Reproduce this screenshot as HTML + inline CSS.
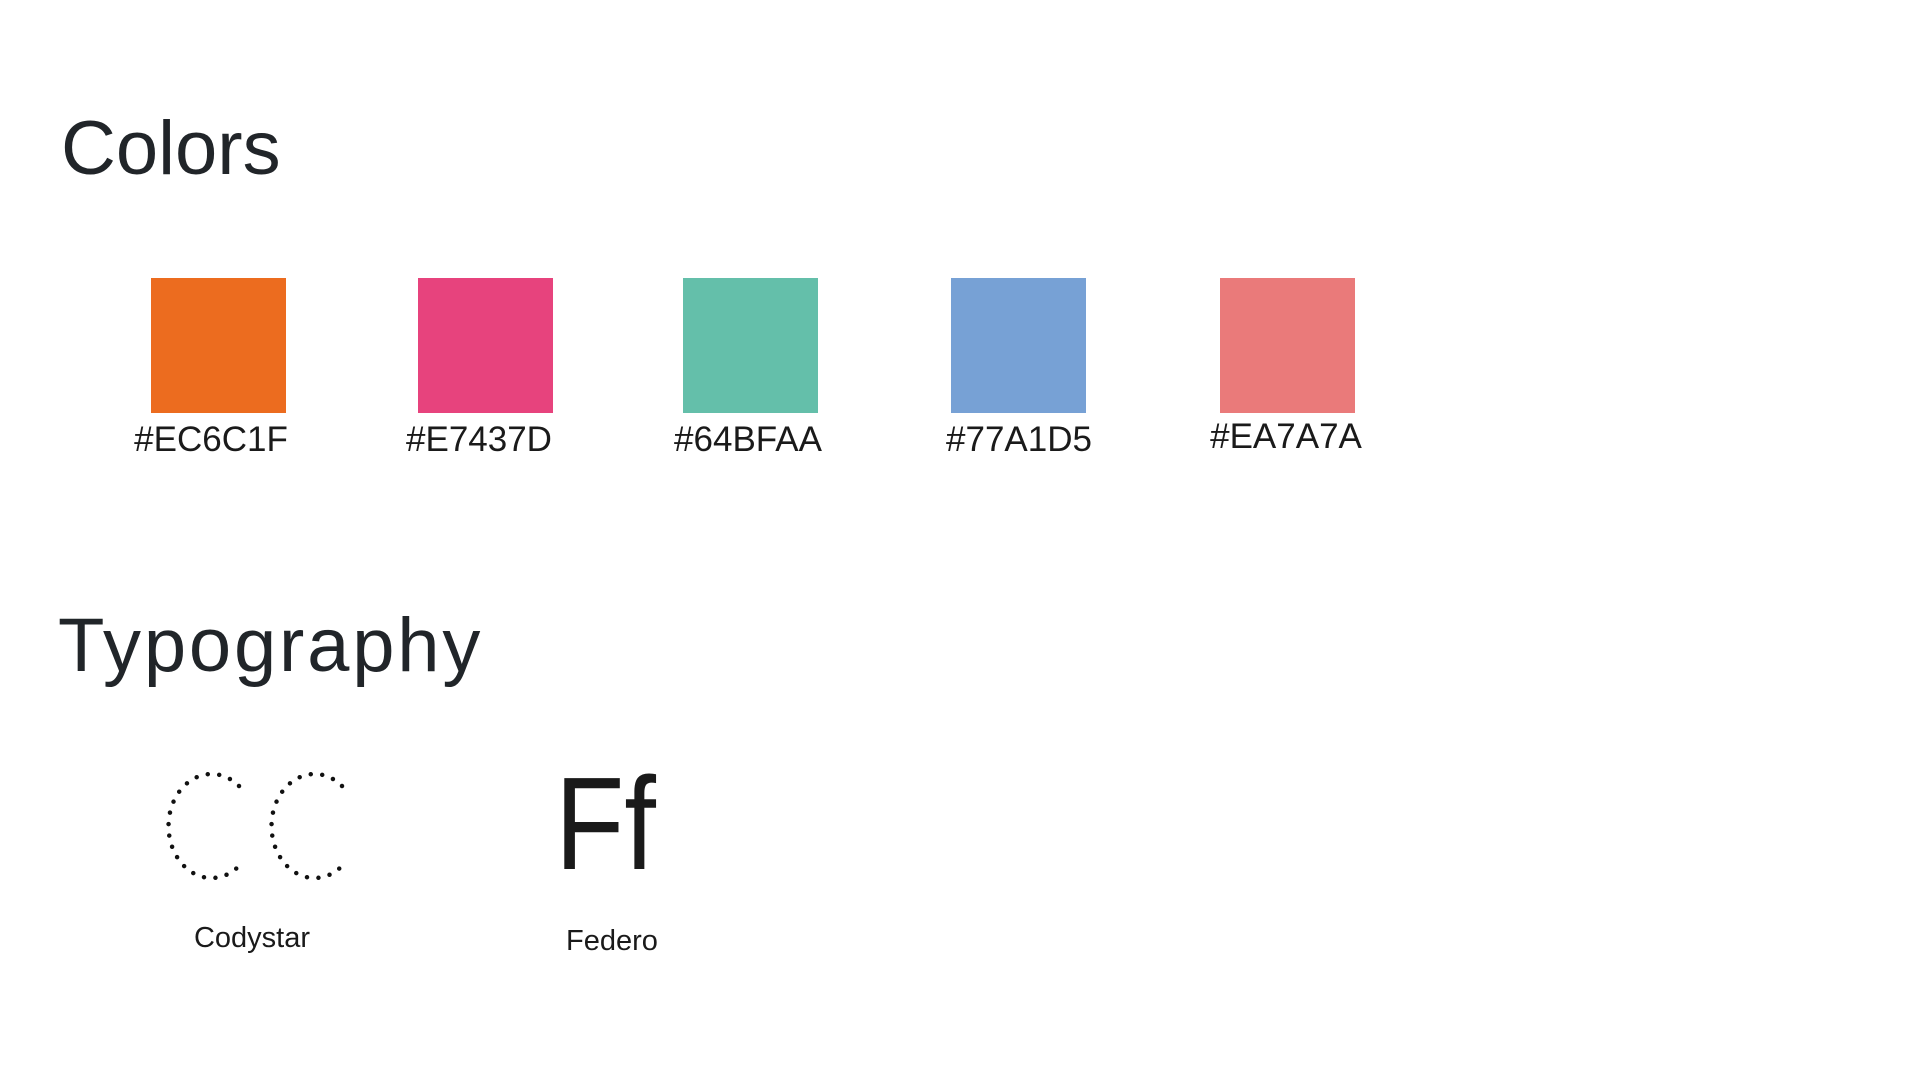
<!DOCTYPE html>
<html><head><meta charset="utf-8"><style>
html,body{margin:0;padding:0;background:#fff;width:1920px;height:1080px;overflow:hidden}
body{font-family:"Liberation Sans",sans-serif;color:#212529;position:relative}
.h{position:absolute;left:61px;font-size:76px;line-height:1;margin:0;font-weight:normal}
.sw{position:absolute;top:278px;width:135px;height:135px}
.lb{position:absolute;font-size:35px;line-height:1;width:260px;text-align:center;color:#1a1a1a}
.cap{position:absolute;font-size:29px;line-height:1;width:200px;text-align:center;color:#1a1a1a}
</style></head><body>
<h1 class="h" style="top:111px;letter-spacing:0px">Colors</h1>
<div class="sw" style="left:151px;background:#EC6C1F"></div>
<div class="sw" style="left:418px;background:#E7437D"></div>
<div class="sw" style="left:683px;background:#64BFAA"></div>
<div class="sw" style="left:951px;background:#77A1D5"></div>
<div class="sw" style="left:1220px;background:#EA7A7A"></div>
<div class="lb" style="left:81px;top:422px">#EC6C1F</div>
<div class="lb" style="left:349px;top:422px">#E7437D</div>
<div class="lb" style="left:618px;top:422px">#64BFAA</div>
<div class="lb" style="left:889px;top:422px">#77A1D5</div>
<div class="lb" style="left:1156px;top:419px">#EA7A7A</div>
<h1 class="h" style="top:608px;left:58px;letter-spacing:2.8px">Typography</h1>
<svg style="position:absolute;left:160px;top:770px" width="230" height="130">
<g fill="none" stroke="#111" stroke-width="4.5" stroke-linecap="round" stroke-dasharray="0 11.5">
<path d="M79 16 A43 52 0 1 0 79 96"/>
<path d="M182 16 A43 52 0 1 0 182 96"/>
</g></svg>
<div class="cap" style="left:152px;top:924px">Codystar</div>
<div style="position:absolute;left:555px;top:758px;font-size:132px;line-height:1;transform:scaleX(0.86);transform-origin:left top;color:#1a1a1a">Ff</div>
<div class="cap" style="left:512px;top:927px">Federo</div>
</body></html>
